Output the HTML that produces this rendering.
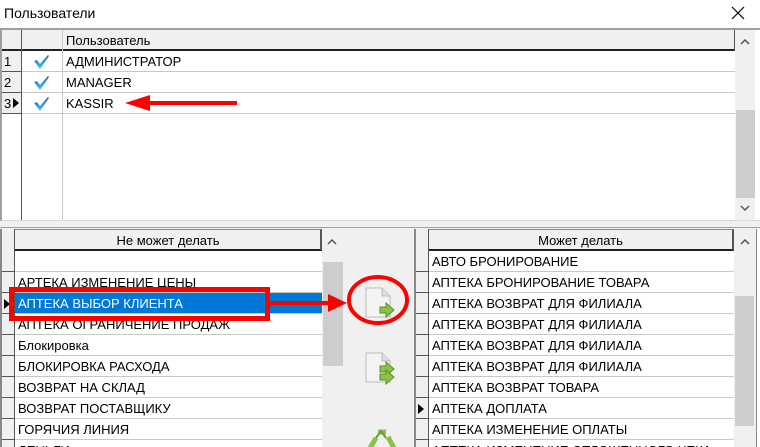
<!DOCTYPE html><html><head><meta charset="utf-8"><style>
*{margin:0;padding:0;box-sizing:border-box}
html,body{width:760px;height:447px;overflow:hidden}
body{background:#f0f0f0;font-family:"Liberation Sans",sans-serif;font-size:13px;position:relative}
.a{position:absolute}
.t{white-space:nowrap;overflow:hidden;line-height:21px;color:#000}
</style></head><body>
<div class="a" style="left:0;top:0;width:760px;height:28px;background:#fff"></div>
<div class="a t" style="left:4px;top:2px;font-size:14px;line-height:22px">Пользователи</div>
<svg class="a" style="left:731px;top:6px" width="14" height="14"><path d="M1 1L13 13M13 1L1 13" stroke="#000" stroke-width="1.2"/></svg>
<!-- top grid -->
<div class="a" style="left:0;top:28px;width:760px;height:193px;background:#fff;border-top:2px solid #a0a0a0;border-left:2px solid #a0a0a0;border-bottom:1px solid #d8d8d8"></div>
<div class="a" style="left:2px;top:30px;width:733px;height:21px;background:#f0f0f0;border-bottom:2px solid #222;border-right:1px solid #555"></div>
<div class="a" style="left:21px;top:30px;width:42px;height:190px;border-right:1px solid #c8c8c8;border-left:1px solid #555"></div>
<div class="a t" style="left:66px;top:30px">Пользователь</div>
<div class="a" style="left:2px;top:71px;width:733px;border-top:1px solid #c8c8c8"></div>
<div class="a" style="left:2px;top:92px;width:733px;border-top:1px solid #c8c8c8"></div>
<div class="a" style="left:2px;top:113px;width:733px;border-top:1px solid #c8c8c8"></div>
<div class="a" style="left:2px;top:51px;width:20px;height:63px;background:#f0f0f0;border-right:1px solid #555"></div>
<div class="a" style="left:2px;top:71px;width:20px;border-top:1px solid #555"></div>
<div class="a" style="left:2px;top:92px;width:20px;border-top:1px solid #555"></div>
<div class="a" style="left:2px;top:113px;width:20px;border-top:1px solid #555"></div>
<div class="a t" style="left:4px;top:51px">1</div>
<div class="a t" style="left:4px;top:72px">2</div>
<div class="a t" style="left:4px;top:93px">3</div>
<svg class="a" style="left:12px;top:97px" width="8" height="12"><path d="M1 1L7 6L1 11Z" fill="#000"/></svg>
<svg class="a" style="left:32px;top:53px" width="20" height="62"><defs><linearGradient id="cg" x1="0" y1="0" x2="0" y2="1"><stop offset="0" stop-color="#1b5fc4"/><stop offset="1" stop-color="#45c6ee"/></linearGradient></defs><g fill="url(#cg)"><path d="M2 8L5 7L8 11L16 2L17 3L8 16Z"/><path d="M2 29L5 28L8 32L16 23L17 24L8 37Z"/><path d="M2 50L5 49L8 53L16 44L17 45L8 58Z"/></g></svg>
<div class="a t" style="left:66px;top:51px">АДМИНИСТРАТОР</div>
<div class="a t" style="left:66px;top:72px">MANAGER</div>
<div class="a t" style="left:66px;top:93px">KASSIR</div>
<svg class="a" style="left:122px;top:93px" width="120" height="20"><path d="M115 10H28" stroke="#f00" stroke-width="4"/><path d="M3 10L28 2V18Z" fill="#f00"/></svg>
<div class="a" style="left:735px;top:30px;width:20px;height:190px;background:#f0f0f0"></div>
<div class="a" style="left:736px;top:110px;width:19px;height:88px;background:#cdcdcd"></div>
<svg class="a" style="left:740px;top:38px" width="10" height="8"><path d="M1 6L5 2L9 6" fill="none" stroke="#555" stroke-width="1.5"/></svg>
<svg class="a" style="left:740px;top:204px" width="10" height="8"><path d="M1 2L5 6L9 2" fill="none" stroke="#555" stroke-width="1.5"/></svg>
<div class="a" style="left:0;top:227px;width:760px;border-top:1px solid #a0a0a0"></div>
<!-- left grid -->
<div class="a" style="left:0;top:229px;width:344px;height:218px;background:#fff;border-left:2px solid #888"></div>
<div class="a" style="left:2px;top:229px;width:320px;height:22px;background:#f0f0f0;border-bottom:2px solid #222;border-right:2px solid #555;border-top:1px solid #888"></div>
<div class="a t" style="left:14px;top:230px;width:308px;text-align:center">Не может делать</div>
<div class="a" style="left:2px;top:229px;width:13px;height:218px;background:#f0f0f0;border-right:1px solid #555"></div>
<div class="a" style="left:322px;top:229px;width:22px;height:218px;background:#f0f0f0"></div>
<div class="a" style="left:323px;top:262px;width:20px;height:104px;background:#cdcdcd"></div>
<svg class="a" style="left:327px;top:238px" width="10" height="8"><path d="M1 6L5 2L9 6" fill="none" stroke="#555" stroke-width="1.5"/></svg>
<div id="L"></div>
<!-- middle -->
<div class="a" style="left:345px;top:229px;width:68px;height:218px;background:#f0f0f0"></div>
<svg class="a" style="left:364px;top:286px" width="34" height="100">
<g><path d="M2 2H18L26 10V31H2Z" fill="#f4f4f4" stroke="#bbb"/><path d="M18 2V10H26" fill="#ddd" stroke="#bbb"/>
<path d="M16 21H22V17L30 24L22 31V27H16Z" fill="#8bc34a" stroke="#5a8f1e"/></g>
<g transform="translate(0,65)"><path d="M2 2H18L26 10V31H2Z" fill="#f4f4f4" stroke="#bbb"/><path d="M18 2V10H26" fill="#ddd" stroke="#bbb"/>
<path d="M16 15H22V11L30 18L22 25V21H16Z" fill="#8bc34a" stroke="#5a8f1e"/><path d="M16 23H22V19L30 26L22 33V29H16Z" fill="#8bc34a" stroke="#5a8f1e"/></g>
</svg>
<svg class="a" style="left:364px;top:428px" width="34" height="20"><path d="M6 20L12 10M14 4H22M24 9L30 20" fill="none" stroke="#8bc34a" stroke-width="5"/><path d="M12 10L17 3L22 10" fill="none" stroke="#6aa02c" stroke-width="2"/></svg>
<!-- right grid -->
<div class="a" style="left:414px;top:229px;width:346px;height:218px;background:#fff;border-left:2px solid #888"></div>
<div class="a" style="left:416px;top:229px;width:318px;height:22px;background:#f0f0f0;border-bottom:2px solid #222;border-right:2px solid #555;border-top:1px solid #888"></div>
<div class="a t" style="left:428px;top:230px;width:305px;text-align:center">Может делать</div>
<div class="a" style="left:416px;top:229px;width:13px;height:218px;background:#f0f0f0;border-right:1px solid #555"></div>
<div class="a" style="left:734px;top:229px;width:22px;height:218px;background:#f0f0f0"></div>
<div class="a" style="left:735px;top:296px;width:19px;height:130px;background:#cdcdcd"></div>
<svg class="a" style="left:740px;top:238px" width="10" height="8"><path d="M1 6L5 2L9 6" fill="none" stroke="#555" stroke-width="1.5"/></svg>
<div class="a" style="left:756px;top:229px;width:4px;height:218px;background:#fff;border-left:1px solid #888"></div>
<div id="R"></div>
<svg class="a" style="left:0;top:270px" width="350" height="60">
<rect x="11.5" y="19.5" width="256" height="29" fill="none" stroke="#f00" stroke-width="5"/>
<path d="M270 33H330" stroke="#f00" stroke-width="4"/><path d="M347 33L328 24V42Z" fill="#f00"/>
</svg>
<svg class="a" style="left:345px;top:273px" width="68" height="54"><ellipse cx="33" cy="27" rx="29" ry="23" fill="none" stroke="#f00" stroke-width="4"/></svg>
<script>
var L=["","АРТЕКА ИЗМЕНЕНИЕ ЦЕНЫ","АПТЕКА ВЫБОР КЛИЕНТА","АПТЕКА ОГРАНИЧЕНИЕ ПРОДАЖ","Блокировка","БЛОКИРОВКА РАСХОДА","ВОЗВРАТ НА СКЛАД","ВОЗВРАТ ПОСТАВЩИКУ","ГОРЯЧИЯ ЛИНИЯ","ДЕНЬГИ"];
var R=["АВТО БРОНИРОВАНИЕ","АПТЕКА БРОНИРОВАНИЕ ТОВАРА","АПТЕКА ВОЗВРАТ ДЛЯ ФИЛИАЛА","АПТЕКА ВОЗВРАТ ДЛЯ ФИЛИАЛА","АПТЕКА ВОЗВРАТ ДЛЯ ФИЛИАЛА","АПТЕКА ВОЗВРАТ ДЛЯ ФИЛИАЛА","АПТЕКА ВОЗВРАТ ТОВАРА","АПТЕКА ДОПЛАТА","АПТЕКА ИЗМЕНЕНИЕ ОПЛАТЫ","АПТЕКА ИЗМЕНЕНИЕ ОТЛОЖЕННОГО ЧЕКА"];
function g(a,x,w,sel,id){var h="";for(var i=0;i<a.length;i++){var y=251+i*21;var bg=(i==sel&&id=="L")?"background:#0078d7;color:#fff;":"";
h+='<div class="a t" style="left:'+x+'px;top:'+y+'px;width:'+w+'px;height:21px;border-bottom:1px solid #c8c8c8;padding-left:3px;'+bg+'">'+a[i]+'</div>';
h+='<div class="a" style="left:'+(x-13)+'px;top:'+(y+20)+'px;width:13px;border-top:1px solid #555"></div>';
if(i==sel)h+='<svg class="a" style="left:'+(x-12)+'px;top:'+(y+5)+'px" width="8" height="12"><path d="M1 1L7 6L1 11Z" fill="#000"/></svg>';}
document.getElementById(id).innerHTML=h;}
g(L,15,307,2,"L");g(R,429,305,7,"R");
</script>
</body></html>
